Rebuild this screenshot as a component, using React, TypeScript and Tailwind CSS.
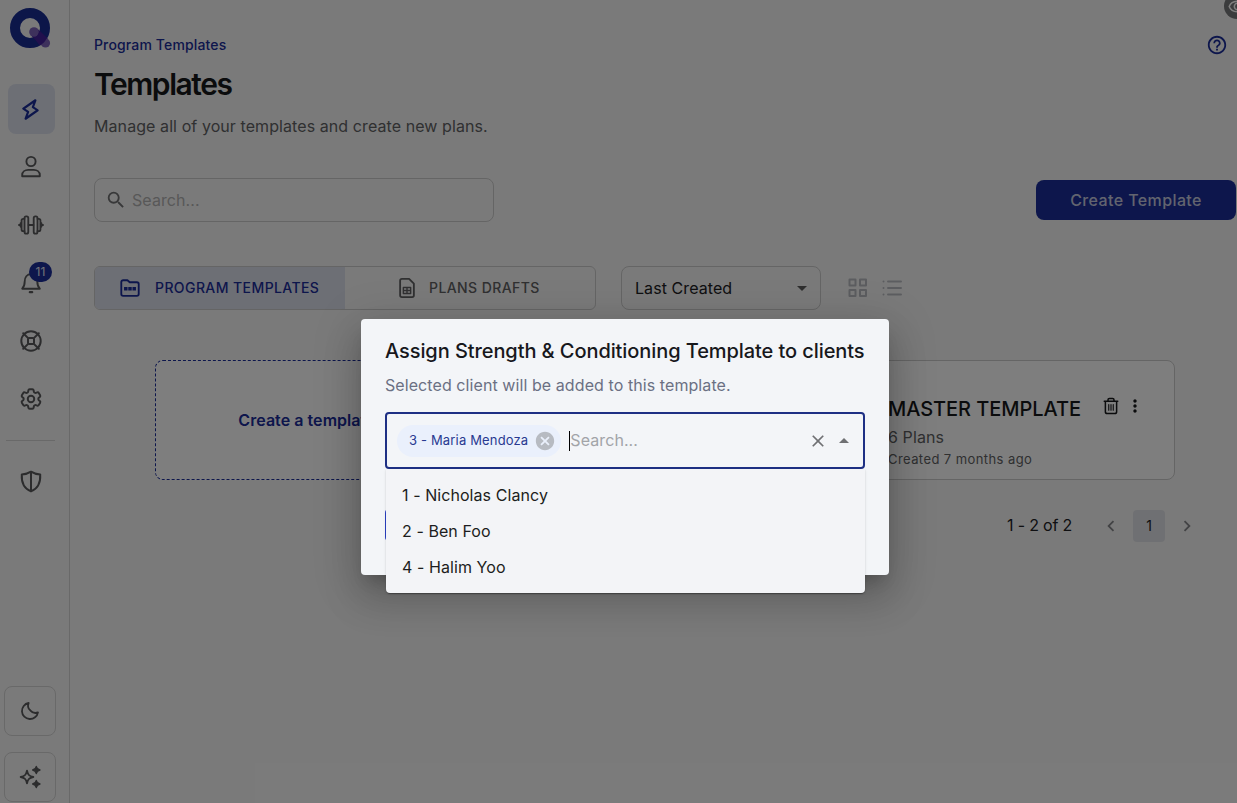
import type { ReactNode } from 'react'
import { HiOutlineCog6Tooth } from 'react-icons/hi2'
import { MdArrowDropDown, MdArrowDropUp, MdCancel, MdChevronLeft, MdChevronRight, MdClose, MdHelpOutline, MdMoreVert, MdSearch } from 'react-icons/md'
import { PiLightningBold } from 'react-icons/pi'

const clients = ['1 - Nicholas Clancy', '2 - Ben Foo', '4 - Halim Yoo']

function Icon({ size = 24, width = 1.9, children }: { size?: number; width?: number; children: ReactNode }) {
  return (
    <svg
      width={size}
      height={size}
      viewBox="0 0 24 24"
      fill="none"
      stroke="currentColor"
      strokeWidth={width}
      strokeLinecap="round"
      strokeLinejoin="round"
      className="shrink-0"
    >
      {children}
    </svg>
  )
}

function Logo() {
  return (
    <svg width="42" height="42" viewBox="0 0 42 42" className="shrink-0">
      <circle cx="21" cy="20" r="15" fill="none" stroke="#182c92" strokeWidth="10" />
      <path d="M26 25L35.500 34" stroke="#43209a" strokeWidth="9.400" />
      <circle cx="25" cy="24" r="4.800" fill="#7c62b8" />
      <circle cx="36.500" cy="35" r="4.600" fill="#7c62b8" />
      <path d="M30.500 23l7.200 7.200c-1.400 3.300-3.700 5.600-6.900 7.200l-5.600-7.200c2.500-1.300 4.500-3.900 5.300-7.200z" fill="#43209a" />
    </svg>
  )
}

function UserIcon() {
  return (
    <Icon>
      <circle cx="12" cy="6.500" r="4.600" />
      <path d="M3.200 21.300v-1.200c0-3.300 3-5.200 6-5.200h5.600c3 0 6 1.900 6 5.200v1.200z" />
    </Icon>
  )
}

function DumbbellIcon() {
  return (
    <Icon size={26} width={1.700}>
      <path d="M9.800 12h4.400M0.900 12h1.200M21.900 12h1.200" />
      <rect x="6" y="4" width="3.500" height="16" rx="1.500" />
      <rect x="14.500" y="4" width="3.500" height="16" rx="1.500" />
      <path d="M6 6.300H4.800c-.9 0-1.500.6-1.500 1.500v8.400c0 .9.600 1.500 1.500 1.500H6M18 6.300h1.200c.9 0 1.500.6 1.500 1.500v8.400c0 .9-.6 1.500-1.500 1.500H18M3.300 9.500c-.8.4-1.200 1.200-1.200 2.500s.4 2.100 1.200 2.500M20.700 9.500c.8.400 1.200 1.200 1.200 2.500s-.4 2.100-1.200 2.500" />
    </Icon>
  )
}

function BellIcon() {
  return (
    <Icon>
      <path d="M3.200 17.700h17.600c-2-2-2.500-4-2.500-7.200 0-4-2.300-7.500-6.300-7.500s-6.300 3.500-6.300 7.500c0 3.200-.5 5.200-2.500 7.200z" />
      <path d="M10.800 21.200h2.400" strokeWidth="2.200" />
    </Icon>
  )
}

function SupportIcon() {
  return (
    <Icon width={2}>
      <circle cx="12" cy="12" r="9.700" />
      <rect x="9" y="9" width="6" height="6" rx="1.300" />
      <path d="M4.200 4.200l5.200 5.200M19.800 4.200l-5.200 5.200M4.200 19.800l5.200-5.200M19.800 19.800l-5.200-5.200" />
    </Icon>
  )
}

function ShieldIcon() {
  return (
    <Icon width={2}>
      <path d="M12 1.700c2.500 1.700 5.700 2.600 9.200 2.700.5 8.300-2.200 14.200-9.200 17-7-2.800-9.700-8.700-9.200-17 3.500-.1 6.700-1 9.200-2.700zM12 2v19" />
    </Icon>
  )
}

function SparkleIcon() {
  return (
    <Icon>
      <path d="M9 5.800c.8 4 2.200 5.400 6.300 6.200-4.100.8-5.500 2.200-6.300 6.200-.8-4-2.200-5.400-6.300-6.200 4.100-.8 5.500-2.200 6.300-6.200z" />
      <path
        d="M18.300 1.300c.5 2.400 1.300 3.200 3.700 3.700-2.400.5-3.200 1.300-3.700 3.700-.5-2.400-1.300-3.200-3.700-3.700 2.400-.5 3.200-1.300 3.700-3.700zM18.300 15.300c.5 2.400 1.300 3.200 3.700 3.700-2.400.5-3.200 1.300-3.700 3.700-.5-2.400-1.300-3.200-3.700-3.700 2.400-.5 3.200-1.300 3.700-3.700z"
        fill="currentColor"
        strokeWidth="1.300"
      />
    </Icon>
  )
}

function FolderIcon() {
  return (
    <Icon size={22} width={2}>
      <path d="M2.500 5.500a2 2 0 0 1 2-2h4.700l2.500 2.200h7.800a2 2 0 0 1 2 2v10.800a2 2 0 0 1-2 2h-15a2 2 0 0 1-2-2z" />
      <path d="M5.500 11h3.800v3.600H5.500zM10.100 11h3.800v3.600h-3.800zM14.700 11h3.800v3.600h-3.800z" fill="currentColor" stroke="none" />
    </Icon>
  )
}

function SheetIcon() {
  return (
    <Icon size={22} width={2}>
      <path d="M4.500 4a2 2 0 0 1 2-2h7.800l5.200 5.200V20a2 2 0 0 1-2 2h-11a2 2 0 0 1-2-2z" />
      <path d="M8 11.500h8v6.500H8zM8 14.700h8M12 11.500V18" strokeWidth="1.500" />
    </Icon>
  )
}

function TrashIcon() {
  return (
    <Icon size={18} width={2}>
      <path d="M3 5.500h18M8 5V3.800C8 2.800 8.800 2 9.800 2h4.400c1 0 1.800.8 1.800 1.800V5M4.500 6v13.500c0 1.400 1 2.500 2.500 2.500h10c1.500 0 2.500-1.100 2.500-2.500V6" />
      <path d="M9 10v7.500M12 10v7.500M15 10v7.500" strokeWidth="1.500" />
    </Icon>
  )
}

function NavItem({ active = false, children }: { active?: boolean; children: ReactNode }) {
  return (
    <div
      className={`relative flex h-[50px] w-[47px] items-center justify-center rounded-lg pr-[2px] ${active ? 'bg-[#dadeeb] text-[#1a2c98]' : 'text-[#58595b]'}`}
    >
      {children}
    </div>
  )
}

function Sidebar() {
  return (
    <nav className="flex h-full w-[70px] shrink-0 flex-col border-r border-[#d2d2d2] pt-2 pb-[1px]">
      <div className="ml-[9px] h-[76px]"><Logo /></div>
      <div className="ml-2 flex flex-col gap-2">
        <NavItem active><PiLightningBold size={23} className="rotate-12" /></NavItem>
        <NavItem><UserIcon /></NavItem>
        <NavItem><DumbbellIcon /></NavItem>
        <NavItem>
          <BellIcon />
          <span className="absolute top-[4px] left-[21px] flex h-5 w-[23px] items-center justify-center rounded-full bg-[#1a2c98] text-xs text-[#e0e3f0]">11</span>
        </NavItem>
        <NavItem><SupportIcon /></NavItem>
        <NavItem><HiOutlineCog6Tooth size={26} strokeWidth={1.8} className="shrink-0" /></NavItem>
      </div>
      <div className="mt-4 ml-[6px] w-[49px] border-t border-[#d2d2d2]" />
      <div className="mt-4 ml-2"><NavItem><ShieldIcon /></NavItem></div>
      <div className="mt-auto ml-1 flex flex-col gap-4 text-[#58595b]">
        <div className="flex h-[50px] w-[52px] items-center justify-center rounded-lg border border-[#d2d2d2]">
          <Icon size={22} width={2}>
            <path d="M20.700 13.500A8.800 8.800 0 1 1 10.500 3.300 7 7 0 0 0 12.500 11.500 7.300 7.300 0 0 0 20.700 13.500z" />
          </Icon>
        </div>
        <div className="flex h-[50px] w-[52px] items-center justify-center rounded-lg border border-[#d2d2d2]"><SparkleIcon /></div>
      </div>
    </nav>
  )
}

function Toolbar() {
  return (
    <div className="mt-11 flex items-center">
      <div className="flex h-11 w-[502px] overflow-hidden rounded-md border border-[#cacaca] text-sm font-medium tracking-[0.41px]">
        <div className="flex w-[250px] items-center gap-[14px] bg-[#dadeeb] pl-6 text-[#1a2c98]">
          <FolderIcon />
          <span>PROGRAM TEMPLATES</span>
        </div>
        <div className="flex flex-1 items-center gap-[11px] pl-[51px] text-[#606163]">
          <SheetIcon />
          <span>PLANS DRAFTS</span>
        </div>
      </div>
      <div className="ml-[25px] flex h-11 w-[200px] items-center justify-between rounded-lg border border-[#cacaca] pr-[6px] pl-[13px] text-base tracking-[0.07px] text-[#202124]">
        <span>Last Created</span>
        <MdArrowDropDown size={24} className="text-[#5c5c5c]" />
      </div>
      <div className="ml-[25px] flex items-center gap-[10px] text-[#b9bbc1]">
        <Icon width={2}>
          <path d="M3.500 3.500h6v6h-6zM14 3.500h6v6h-6zM3.500 14h6v6h-6zM14 14h6v6h-6z" />
        </Icon>
        <Icon width={2}>
          <path d="M8 5.500h13M8 12h13M8 18.500h13M3.500 5.500h.01M3.500 12h.01M3.500 18.500h.01" />
        </Icon>
      </div>
    </div>
  )
}

function TemplateCards() {
  return (
    <div className="mt-[50px] mr-[62px] ml-[61px] flex justify-between">
      <div className="flex h-[120px] w-[304px] items-center justify-center rounded-lg border border-dashed border-[#1a2c98] bg-[#fdfdfd] text-base font-semibold tracking-[0.05px] text-[#1a2c98]">
        Create a template
      </div>
      <div className="h-[120px] w-[304px] rounded-lg border border-[#cacaca] bg-[#fdfdfd]" />
      <div className="flex h-[120px] w-[304px] justify-between rounded-lg border border-[#cacaca] bg-[#fdfdfd] pr-[29px] pl-4">
        <div className="pt-[34px]">
          <div className="text-xl leading-7 font-medium tracking-[-0.05px] text-[#17181a]">MASTER TEMPLATE</div>
          <div className="text-base leading-7 tracking-[0.1px] text-[#606163]">6 Plans</div>
          <div className="text-[13px] leading-4 tracking-[0.42px] text-[#606163]">Created 7 months ago</div>
        </div>
        <div className="flex items-start gap-[5px] pt-9 text-[#17181a]">
          <TrashIcon />
          <MdMoreVert size={20} className="-mt-px" />
        </div>
      </div>
    </div>
  )
}

function Pagination() {
  return (
    <div className="mt-[30px] mr-[39px] flex items-center justify-end text-[#202124]">
      <span className="mr-[28px] -mt-0.5 text-base tracking-[-0.2px]">1 - 2 of 2</span>
      <MdChevronLeft size={22} className="text-[#85868a]" />
      <span className="mx-[11px] flex size-8 items-center justify-center rounded bg-[#dfe1e6] text-sm">1</span>
      <MdChevronRight size={22} className="text-[#85868a]" />
    </div>
  )
}

function AssignDialog() {
  return (
    <div className="relative h-64 w-[528px] rounded bg-[#f3f5f8] px-6 pt-[18px] shadow-[0_11px_15px_-7px_rgba(0,0,0,0.2),0_24px_38px_3px_rgba(0,0,0,0.14),0_9px_46px_8px_rgba(0,0,0,0.12)]">
      <h2 className="text-xl leading-7 font-medium tracking-[-0.08px] whitespace-nowrap text-[#17181c]">
        Assign Strength &amp; Conditioning Template to clients
      </h2>
      <p className="mt-[7px] text-base leading-[26px] tracking-[0.08px] text-[#6b7083]">Selected client will be added to this template.</p>
      <div className="mt-[14px] flex h-[57px] items-center rounded border-2 border-[#1e3084] pr-[7px] pl-[10px]">
        <div className="flex h-8 items-center gap-[6px] rounded-full bg-[#eaf0fc] pr-[5px] pl-3 text-[13px] tracking-[0.16px] text-[#293a91]">
          <span>3 - Maria Mendoza</span>
          <MdCancel size={22} className="text-[#b7bbc2]" />
        </div>
        <div className="ml-[8px] h-5 w-px bg-black" />
        <span className="-mt-0.5 flex-1 text-base tracking-[0.08px] text-[#a2a4a8]">Search...</span>
        <MdClose size={20} className="mr-1 text-[#6f7073]" />
        <MdArrowDropUp size={24} className="text-[#6f7073]" />
      </div>
      <button aria-label="Assign" className="mt-10 h-8 w-32 rounded-sm bg-[#2a40c4]" />
      <ul className="absolute top-[150px] left-[25px] h-[124px] w-[479px] rounded-b bg-[#f3f4f7] py-2 shadow-[0_2px_1px_-1px_rgba(0,0,0,0.2),0_1px_1px_rgba(0,0,0,0.14),0_1px_3px_rgba(0,0,0,0.12)]">
        {clients.map((client) => (
          <li key={client} className="flex h-9 items-center px-4 text-base tracking-[0.07px] text-[#1c1d20]">{client}</li>
        ))}
      </ul>
    </div>
  )
}

export default function App() {
  return (
    <div className="relative flex h-[803px] w-[1237px] overflow-hidden bg-[#f5f5f5] font-['Inter',sans-serif]">
      <Sidebar />
      <main className="flex-1 pt-[35px] pl-6">
        <div className="flex items-start justify-between pr-[9px]">
          <div>
            <div className="text-sm leading-5 font-medium tracking-[0.14px] text-[#1a2c98]">Program Templates</div>
            <h1 className="mt-[11px] text-[30px] leading-9 font-semibold tracking-[-1.45px] text-[#17181a]">Templates</h1>
            <p className="mt-3 text-base leading-6 tracking-[0.08px] text-[#606163]">Manage all of your templates and create new plans.</p>
          </div>
          <MdHelpOutline size={22} className="mt-[-1px] text-[#1a2c98]" />
        </div>
        <div className="mt-10 flex items-center justify-between pr-px">
          <div className="flex h-11 w-[400px] items-center gap-[5px] rounded-lg border border-[#cacaca] pl-[10px] text-base tracking-[0.08px] text-[#b0b0b0]">
            <MdSearch size={22} className="text-[#707173]" />
            Search...
          </div>
          <button className="h-10 w-[200px] rounded-lg bg-[#1a2c98] text-base font-medium tracking-[0.4px] text-[#c4c9de]">Create Template</button>
        </div>
        <Toolbar />
        <TemplateCards />
        <Pagination />
      </main>
      <div className="absolute -top-[7px] left-[1224px] flex size-[26px] items-center justify-center rounded-full bg-[#77787a] text-white">
        <Icon size={19}>
          <path d="M1.500 12C5 3 19 3 22.500 12 19 21 5 21 1.500 12z" />
          <circle cx="12" cy="12" r="4" />
        </Icon>
      </div>
      <div className="absolute inset-0 flex items-start bg-black/50 pt-[319px] pl-[361px]">
        <AssignDialog />
      </div>
    </div>
  )
}
